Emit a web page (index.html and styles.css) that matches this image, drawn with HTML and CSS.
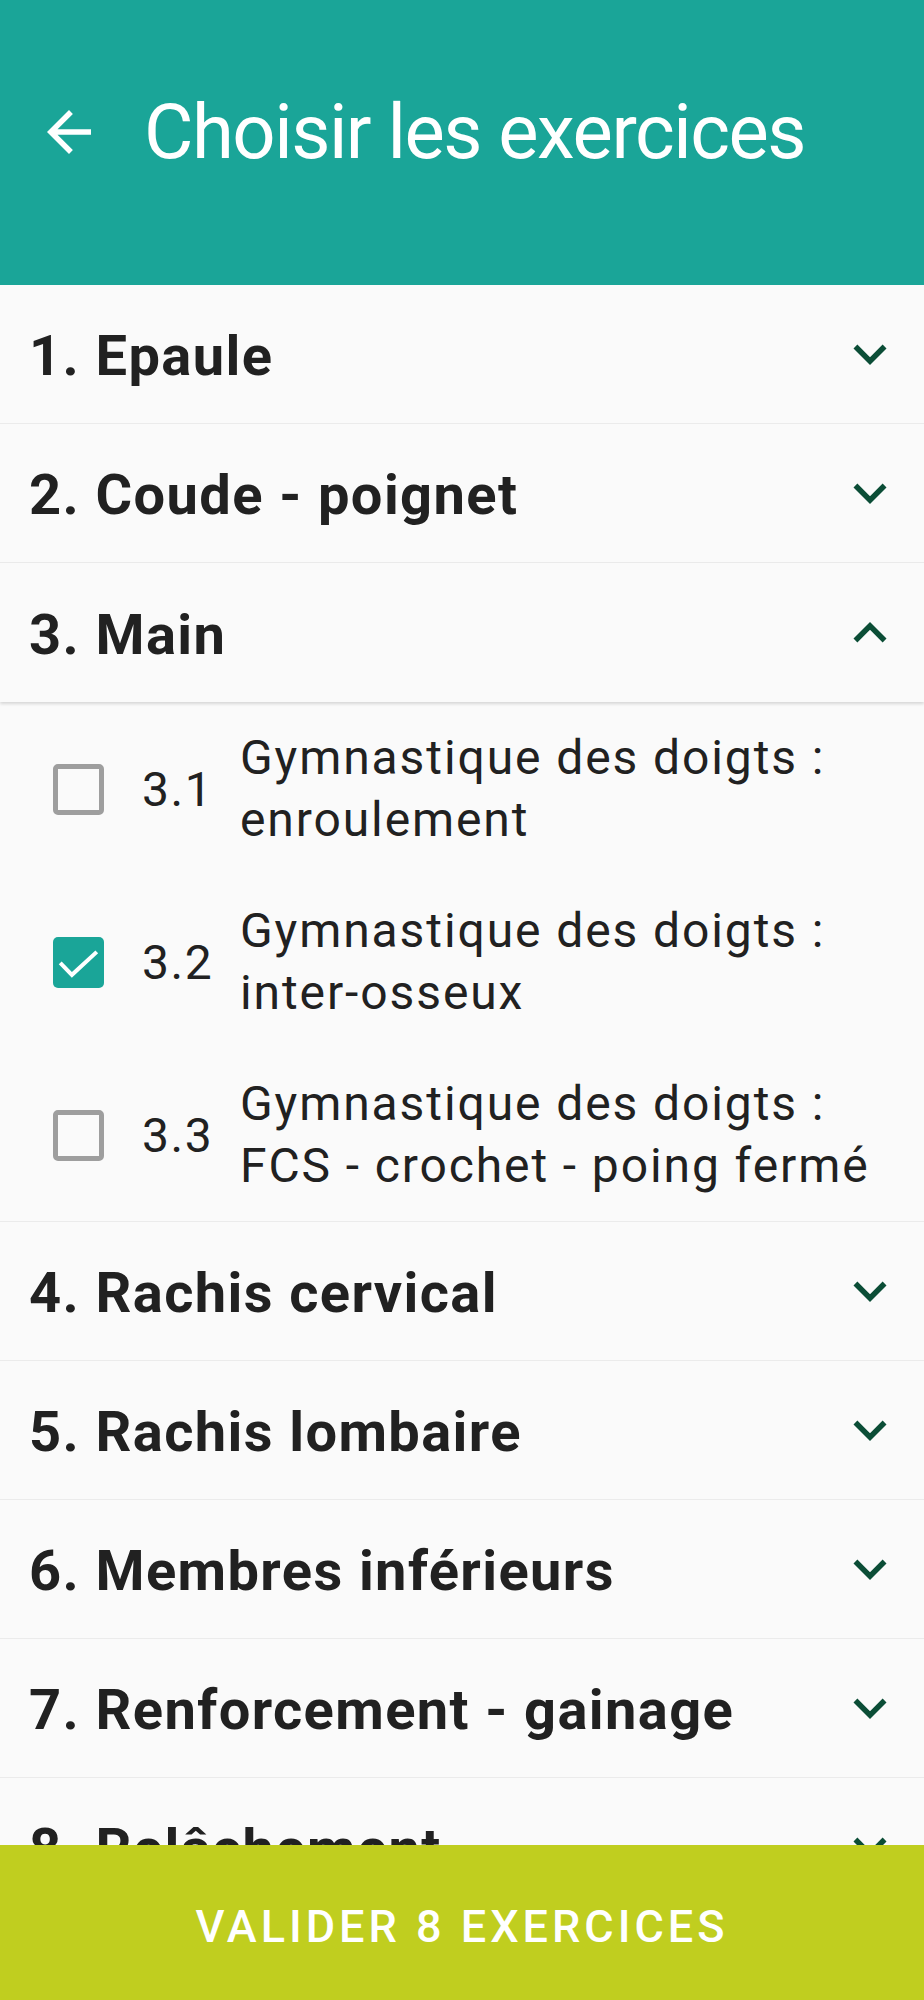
FILE: index.html
```html
<!DOCTYPE html>
<html lang="fr">
  <head>
    <meta charset="UTF-8" />
    <meta name="viewport" content="width=device-width, initial-scale=1.0" />
    <title>Choisir les exercices</title>
    <link rel="stylesheet" href="styles.css">
  </head>
  <body>
    <div class="screen">
      <!-- Top app bar -->
      <header class="app-bar">
        <button class="back-button" aria-label="Retour">
          <svg width="66" height="66" viewBox="0 0 24 24">
            <path d="M20 11H7.83l5.59-5.59L12 4l-8 8 8 8 1.41-1.41L7.83 13H20v-2z" fill="#fff" />
          </svg>
        </button>
        <h1 class="app-title">Choisir les exercices</h1>
      </header>

      <!-- Category list -->
      <div class="list">
        <div class="category">
          <span class="category-name">1. Epaule</span>
          <svg class="chevron" width="66" height="66" viewBox="0 0 24 24"><path d="M16.59 8.59L12 13.17 7.41 8.59 6 10l6 6 6-6z" /></svg>
        </div>
        <div class="category">
          <span class="category-name">2. Coude - poignet</span>
          <svg class="chevron" width="66" height="66" viewBox="0 0 24 24"><path d="M16.59 8.59L12 13.17 7.41 8.59 6 10l6 6 6-6z" /></svg>
        </div>
        <div class="category open">
          <span class="category-name">3. Main</span>
          <svg class="chevron" width="66" height="66" viewBox="0 0 24 24"><path d="M12 8l-6 6 1.41 1.41L12 10.83l4.59 4.58L18 14z" /></svg>
        </div>

        <div class="exercises">
          <label class="exercise">
            <span class="checkbox"></span>
            <span class="exercise-num">3.1</span>
            <span class="exercise-name">Gymnastique des doigts : enroulement</span>
          </label>
          <label class="exercise">
            <span class="checkbox checked">
              <svg width="51" height="51" viewBox="0 0 24 24"><path d="M3.4 12.2l5.5 5.6L20.6 7" fill="none" stroke="#fff" stroke-width="1.9" /></svg>
            </span>
            <span class="exercise-num">3.2</span>
            <span class="exercise-name">Gymnastique des doigts : inter-osseux</span>
          </label>
          <label class="exercise">
            <span class="checkbox"></span>
            <span class="exercise-num">3.3</span>
            <span class="exercise-name">Gymnastique des doigts : FCS - crochet - poing fermé</span>
          </label>
        </div>

        <div class="category">
          <span class="category-name">4. Rachis cervical</span>
          <svg class="chevron" width="66" height="66" viewBox="0 0 24 24"><path d="M16.59 8.59L12 13.17 7.41 8.59 6 10l6 6 6-6z" /></svg>
        </div>
        <div class="category">
          <span class="category-name">5. Rachis lombaire</span>
          <svg class="chevron" width="66" height="66" viewBox="0 0 24 24"><path d="M16.59 8.59L12 13.17 7.41 8.59 6 10l6 6 6-6z" /></svg>
        </div>
        <div class="category">
          <span class="category-name">6. Membres inférieurs</span>
          <svg class="chevron" width="66" height="66" viewBox="0 0 24 24"><path d="M16.59 8.59L12 13.17 7.41 8.59 6 10l6 6 6-6z" /></svg>
        </div>
        <div class="category">
          <span class="category-name">7. Renforcement - gainage</span>
          <svg class="chevron" width="66" height="66" viewBox="0 0 24 24"><path d="M16.59 8.59L12 13.17 7.41 8.59 6 10l6 6 6-6z" /></svg>
        </div>
        <div class="category">
          <span class="category-name">8. Relâchement</span>
          <svg class="chevron" width="66" height="66" viewBox="0 0 24 24"><path d="M16.59 8.59L12 13.17 7.41 8.59 6 10l6 6 6-6z" /></svg>
        </div>
      </div>

      <!-- Validate button -->
      <button class="validate-button">Valider 8 exercices</button>
    </div>
  </body>
</html>
```

FILE: styles.css
```css
body {
  margin: 0;
  font-family: Roboto, "Noto Sans", sans-serif;
  background-color: #fafafa;
  color: #212121;
}

.screen {
  display: flex;
  flex-direction: column;
  height: 2000px;
  overflow: hidden;
}

/* Top app bar */
.app-bar {
  flex: none;
  height: 285px;
  box-sizing: border-box;
  padding: 0 0 22px 36px;
  display: flex;
  align-items: center;
  gap: 42px;
  background-color: #1aa598;
}

.back-button {
  background: none;
  border: none;
  padding: 0;
  display: flex;
}

.app-title {
  margin: 0;
  font-size: 76px;
  line-height: 76px;
  font-weight: 400;
  letter-spacing: -1.5px;
  color: #fff;
}

/* List */
.list {
  flex: 1;
  overflow: hidden;
}

.category {
  height: 139px;
  box-sizing: border-box;
  display: flex;
  align-items: center;
  justify-content: space-between;
  padding: 4px 21px 0 29px;
  border-bottom: 1px solid #ebebeb;
}

.category.open {
  border-bottom: none;
  box-shadow: 0 2px 3px rgba(0, 0, 0, 0.14);
  position: relative;
}

.category-name {
  font-size: 56px;
  font-weight: 700;
  letter-spacing: 1.4px;
  color: #212121;
}

.chevron {
  fill: #0b4d36;
  margin-top: -4px;
}

.exercises {
  border-bottom: 1px solid #ebebeb;
}

.exercise {
  display: flex;
  align-items: center;
  padding: 25px 30px 24px 53px;
  min-height: 124px;
}

.checkbox {
  flex: none;
  width: 51px;
  height: 51px;
  box-sizing: border-box;
  border: 5px solid #9e9e9e;
  border-radius: 5px;
  margin-right: 38px;
}

.checkbox.checked {
  border: none;
  background-color: #1aa598;
  display: flex;
}

.exercise-num {
  flex: none;
  width: 98px;
  font-size: 48px;
  letter-spacing: 1.5px;
}

.exercise-name {
  font-size: 48px;
  line-height: 62px;
  letter-spacing: 1.9px;
}

/* Bottom button */
.validate-button {
  flex: none;
  height: 155px;
  border: none;
  background-color: #c0ce1f;
  color: #fff;
  font-family: Roboto, "Noto Sans", sans-serif;
  font-size: 45px;
  font-weight: 500;
  letter-spacing: 4px;
  text-transform: uppercase;
  padding-top: 8px;
}
```
